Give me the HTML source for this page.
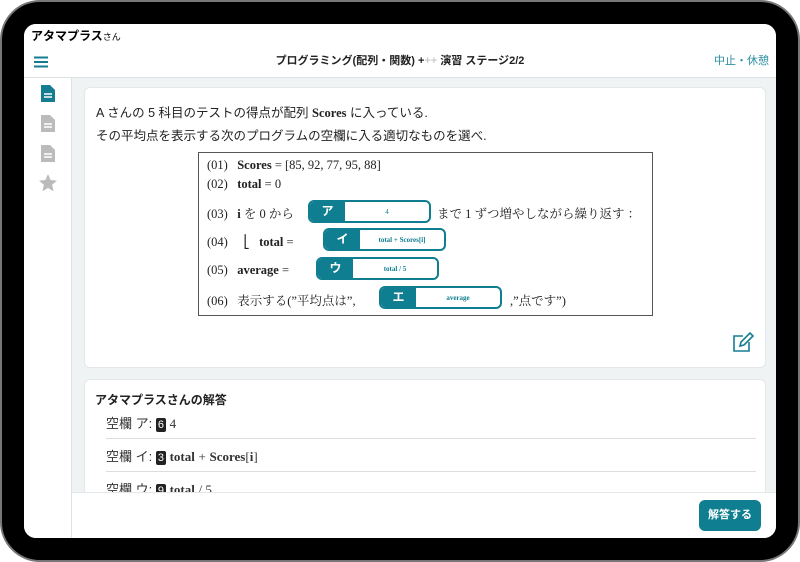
<!DOCTYPE html><html><head><meta charset="utf-8"><style>
*{margin:0;padding:0;box-sizing:border-box}
body{width:800px;height:562px;background:#fff;font-family:"Liberation Sans","Noto Sans CJK JP",sans-serif;position:relative;overflow:hidden}
.frame{position:absolute;left:0;top:0;width:800px;height:562px;border-radius:40px;background:#000;border:2px solid #777}
.screen{position:absolute;left:24px;top:24px;width:752px;height:514px;background:#f0f3f4;border-radius:12px;overflow:hidden}
.h1{position:absolute;left:0;top:0;width:752px;height:22px;background:#fff;font-weight:bold;font-size:12px;padding:3px 7px}
.h1 small{font-size:9px;font-weight:normal}
.h2{position:absolute;left:0;top:22px;width:752px;height:32px;background:#fff;border-bottom:1px solid #dde2e4}
.side{position:absolute;left:0;top:54px;width:48px;height:460px;background:#fff;border-right:1px solid #dde2e4}
.card{position:absolute;background:#fff;border-radius:6px;border:1px solid #e3e7e9}
.serif{font-family:"Liberation Serif","Noto Serif CJK SC",serif}
.code{position:absolute;left:173px;top:128px;width:455px;height:164px;border:1px solid #555;font-family:"Liberation Serif","Noto Serif CJK SC",serif;font-size:12.5px;color:#222}
.ln{position:absolute;left:8px;white-space:nowrap}
.bl{position:absolute;height:23px;border:2px solid #0f7e90;border-radius:6px;background:#fff;overflow:hidden;display:flex;align-items:center}
.bl .k{background:#0f7e90;color:#fff;width:35px;height:100%;font-family:"Liberation Sans","Noto Sans CJK JP",sans-serif;font-size:12px;font-weight:bold;text-align:center;line-height:19px}
.bl .v{flex:1;text-align:center;font-size:7px;color:#0f7e90;font-weight:bold}
.ans{position:absolute;left:82px;font-size:13px;color:#333;width:650px;height:33px;border-bottom:1px solid #ddd}
.n{display:inline-block;background:#222;color:#fff;font-size:11px;padding:1px 2px;border-radius:2px;font-family:"Liberation Sans",sans-serif}
</style></head><body>
<div class="frame"></div>
<div class="screen">
<div class="h1">アタマプラス<small>さん</small></div>
<div class="h2">
<svg style="position:absolute;left:10px;top:10px" width="14" height="12"><path d="M0 1.5h14M0 6h14M0 10.5h14" stroke="#157d92" stroke-width="2"/></svg>
<div style="position:absolute;left:0;width:752px;top:6px;text-align:center;font-size:11px;font-weight:bold;color:#222">プログラミング(配列・関数) +<span style="color:#ccc">++</span> 演習 ステージ2/2</div>
<div style="position:absolute;right:7px;top:6px;font-size:11px;color:#2b8ea0">中止・休憩</div>
</div>
<div class="side">
<svg style="position:absolute;left:17px;top:7px" width="14" height="17"><path d="M0 0h9l5 5v12h-14z" fill="#157d92"/><path d="M3 9h8M3 12h8" stroke="#fff" stroke-width="1.4"/></svg>
<svg style="position:absolute;left:17px;top:37px" width="14" height="17"><path d="M0 0h9l5 5v12h-14z" fill="#bbb"/><path d="M3 9h8M3 12h8" stroke="#fff" stroke-width="1.4"/></svg>
<svg style="position:absolute;left:17px;top:67px" width="14" height="17"><path d="M0 0h9l5 5v12h-14z" fill="#bbb"/><path d="M3 9h8M3 12h8" stroke="#fff" stroke-width="1.4"/></svg>
<svg style="position:absolute;left:15px;top:96px" width="18" height="18"><path d="M9 0l2.6 6 6.4.6-4.9 4.2 1.5 6.4L9 14l-5.6 3.2 1.5-6.4L0 6.6 6.4 6z" fill="#bbb"/></svg>
</div>
<div class="card" style="left:60px;top:63px;width:682px;height:281px">
<div style="position:absolute;left:11px;top:14px;font-size:12.5px;color:#222;line-height:23px">A さんの 5 科目のテストの得点が配列 <b class="serif">Scores</b> に入っている.<br>その平均点を表示する次のプログラムの空欄に入る適切なものを選べ.</div>
<div class="code" style="left:113px;top:64px">
<div class="ln" style="top:5px">(01) &nbsp; <b>Scores</b> = [85, 92, 77, 95, 88]</div>
<div class="ln" style="top:24px">(02) &nbsp; <b>total</b> = 0</div>
<div class="ln" style="top:51px">(03) &nbsp; <b>i</b> を 0 から</div>
<div class="bl" style="left:109px;top:47px;width:123px"><div class="k">ア</div><div class="v" style="font-weight:normal">4</div></div>
<div class="ln" style="left:238px;top:51px">まで 1 ずつ増やしながら繰り返す ：</div>
<div class="ln" style="top:81px">(04) &nbsp; &nbsp; ⎣ &nbsp; <b>total</b> =</div>
<div class="bl" style="left:124px;top:75px;width:123px"><div class="k">イ</div><div class="v">total + Scores[i]</div></div>
<div class="ln" style="top:110px">(05) &nbsp; <b>average</b> =</div>
<div class="bl" style="left:117px;top:104px;width:123px"><div class="k">ウ</div><div class="v">total / 5</div></div>
<div class="ln" style="top:138px">(06) &nbsp; 表示する(”平均点は”,</div>
<div class="bl" style="left:180px;top:133px;width:123px"><div class="k">エ</div><div class="v">average</div></div>
<div class="ln" style="left:311px;top:138px">,”点です”)</div>
</div>
<svg style="position:absolute;left:647px;top:244px" width="22" height="22"><path d="M11 4H2v15h15v-9" fill="none" stroke="#157d92" stroke-width="1.6"/><path d="M8 14l1-4 9-9 3 3-9 9z" fill="none" stroke="#157d92" stroke-width="1.6"/></svg>
</div>
<div class="card" style="left:60px;top:355px;width:682px;height:140px">
<div style="position:absolute;left:10px;top:11px;font-size:12px;font-weight:bold;color:#222">アタマプラスさんの解答</div>
</div>
<div class="ans" style="top:382px;padding-top:7px">空欄 ア: <span class="n">6</span> <span class="serif">4</span></div>
<div class="ans" style="top:415px;padding-top:7px">空欄 イ: <span class="n">3</span> <b class="serif">total</b> <span class="serif">+</span> <b class="serif">Scores</b><span class="serif">[<b>i</b>]</span></div>
<div class="ans" style="top:448px;padding-top:7px;border:none">空欄 ウ: <span class="n">9</span> <b class="serif">total</b> <span class="serif">/ 5</span></div>
<div style="position:absolute;left:48px;top:468px;width:704px;height:46px;background:#fff;border-top:1px solid #e3e7e9"></div>
<div style="position:absolute;left:675px;top:476px;width:62px;height:31px;background:#0f7e90;border-radius:6px;color:#fff;font-size:11px;font-weight:bold;text-align:center;line-height:31px">解答する</div>
</div>
</body></html>
